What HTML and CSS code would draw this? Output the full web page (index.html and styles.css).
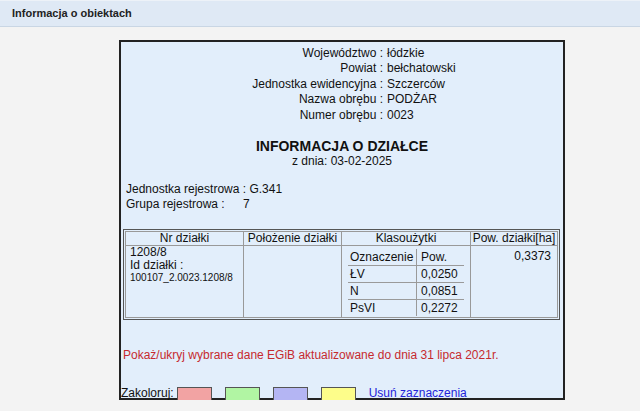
FILE: index.html
```html
<!DOCTYPE html>
<html lang="pl">
<head>
<meta charset="UTF-8" />
<title>Informacja o obiektach</title>
<link rel="stylesheet" href="styles.css">
</head>
<body>
<div class="panel-title">Informacja o obiektach</div>
<div class="karta">
  <div class="lokalizacja">
    <span class="lbl">Województwo :</span><span class="val">łódzkie</span>
    <span class="lbl">Powiat :</span><span class="val">bełchatowski</span>
    <span class="lbl">Jednostka ewidencyjna :</span><span class="val">Szczerców</span>
    <span class="lbl">Nazwa obrębu :</span><span class="val">PODŻAR</span>
    <span class="lbl">Numer obrębu :</span><span class="val">0023</span>
  </div>
  <div class="tytul">INFORMACJA O DZIAŁCE</div>
  <div class="data">z dnia: 03-02-2025</div>
  <div class="rejestr">
    <div>Jednostka rejestrowa : G.341</div>
    <div><span class="grupa">Grupa rejestrowa :</span>7</div>
  </div>
  <div class="tabela-ramka">
    <table class="dzialki">
      <tr>
        <th class="c1">Nr działki</th>
        <th class="c2">Położenie działki</th>
        <th class="c3">Klasoużytki</th>
        <th class="c4">Pow. działki[ha]</th>
      </tr>
      <tr>
        <td class="nr">
          <div class="nr-linia">1208/8</div>
          <div class="nr-linia">Id działki :</div>
          <div class="nr-id">100107_2.0023.1208/8</div>
        </td>
        <td></td>
        <td class="klasy">
          <table class="uzytki">
            <tr><td>Oznaczenie</td><td>Pow.</td></tr>
            <tr><td>ŁV</td><td>0,0250</td></tr>
            <tr><td>N</td><td>0,0851</td></tr>
            <tr><td>PsVI</td><td>0,2272</td></tr>
          </table>
        </td>
        <td class="pow">0,3373</td>
      </tr>
    </table>
  </div>
  <div class="egib">Pokaż/ukryj wybrane dane EGiB aktualizowane do dnia 31 lipca 2021r.</div>
  <div class="koloruj">
    <span>Zakoloruj:</span>
    <span class="kolor czerwony"></span>
    <span class="kolor zielony"></span>
    <span class="kolor niebieski"></span>
    <span class="kolor zolty"></span>
    <a href="#" class="usun">Usuń zaznaczenia</a>
  </div>
</div>
</body>
</html>
```

FILE: styles.css
```css
body {
  margin: 0;
  font-family: 'Liberation Sans', Arial, sans-serif;
  font-size: 12px;
  color: #111;
  background-color: #f3f3f3;
}
.panel-title {
  height: 25px;
  line-height: 25px;
  padding-left: 12px;
  font-size: 11px;
  font-weight: bold;
  color: #222;
  background-color: #dfe9f5;
  border-top: 1px solid #edf2f8;
  border-bottom: 1px solid #c9d6e4;
}
.karta {
  width: 442px;
  height: 356px;
  margin: 13px 0 0 119px;
  border: 2px solid #222;
  background-color: #e2eefb;
}
.lokalizacja {
  display: grid;
  grid-template-columns: 262px auto;
  padding-top: 4px;
  line-height: 15.4px;
}
.lokalizacja .lbl {
  text-align: right;
}
.lokalizacja .val {
  padding-left: 4px;
}
.tytul {
  margin-top: 15px;
  text-align: center;
  font-size: 14px;
  font-weight: bold;
  line-height: 16px;
}
.data {
  text-align: center;
  line-height: 14px;
}
.rejestr {
  margin-top: 14px;
  padding-left: 5px;
  line-height: 15px;
}
.grupa {
  display: inline-block;
  width: 117px;
}
.tabela-ramka {
  margin: 17px 3px 0 2px;
  border: 1px solid #555;
  padding: 1px;
}
.dzialki {
  width: 100%;
  border-collapse: collapse;
  font-size: 12px;
}
.dzialki th,
.dzialki > tbody > tr > td {
  border: 1px solid #999;
  vertical-align: top;
}
.dzialki th {
  font-weight: normal;
  height: 13px;
  line-height: 13px;
  padding: 0;
}
.dzialki .c1 { width: 117px; }
.dzialki .c2 { width: 97px; }
.dzialki .c3 { width: 128px; }
.nr {
  padding: 0 0 0 4px;
}
.nr-linia {
  line-height: 13px;
}
.nr-id {
  font-size: 10px;
  line-height: 12px;
}
.klasy {
  padding: 3px 0 1px 0;
}
.uzytki {
  margin: 0 auto;
  border-collapse: collapse;
}
.uzytki td {
  height: 16px;
  line-height: 15px;
  padding: 0 0 0 2px;
  border-bottom: 1px solid #9a9a9a;
}
.uzytki tr:last-child td {
  border-bottom: none;
}
.uzytki td:first-child {
  width: 66px;
  border-right: 1px solid #9a9a9a;
}
.uzytki td:last-child {
  width: 43px;
  padding-left: 4px;
}
.pow {
  text-align: right;
  padding: 3px 6px 0 0;
  line-height: 14px;
}
.egib {
  margin-top: 28px;
  padding-left: 2px;
  color: #c62a2e;
  line-height: 15px;
}
.koloruj {
  display: flex;
  align-items: center;
  margin-top: 23px;
  line-height: 15px;
}
.kolor {
  width: 33px;
  height: 12px;
  border: 1px solid #555;
  margin-left: 13px;
}
.kolor.czerwony { background-color: #f2a3a3; margin-left: 3px; }
.kolor.zielony { background-color: #b1f5a3; }
.kolor.niebieski { background-color: #b4b5f3; }
.kolor.zolty { background-color: #fdfd8a; }
.usun {
  margin-left: 13px;
  color: #2323d8;
  text-decoration: none;
}
```
